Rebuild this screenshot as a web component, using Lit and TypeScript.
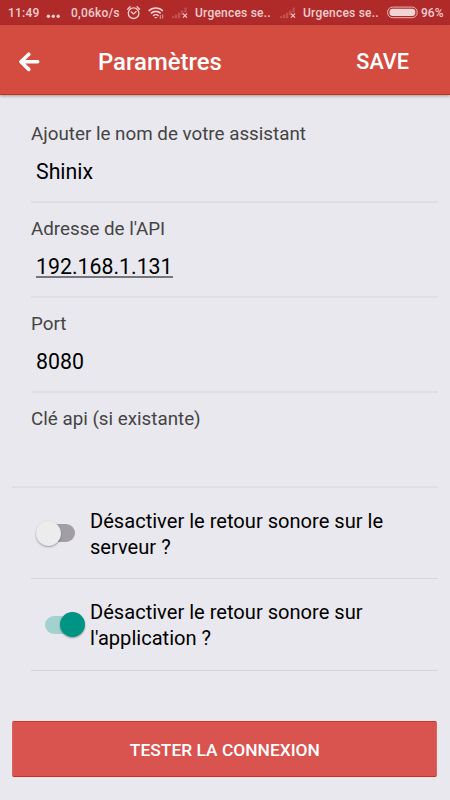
import { LitElement, html, css, svg, nothing } from "lit";
import { customElement, property } from "lit/decorators.js";
import { classMap } from "lit/directives/class-map.js";

@customElement("signal-icon")
class SignalIcon extends LitElement {
  static styles = css`
    :host { display: block; width: 16px; height: 12px; }
    svg { display: block; }
  `;
  render() {
    return html`<svg width="16" height="12" viewBox="0 0 16 12">
      ${[[0, 9.2, 2], [3, 7.4, 3.8], [6, 5.6, 5.6], [9, 3.5, 4.5], [12.4, 0.6, 5]].map(
        ([x, y, h]) => svg`<rect x=${x} y=${y} width="2.3" height=${h} fill="#c54f4f"></rect>`
      )}
      <path d="M11 6.7l4 4M15 6.7l-4 4" stroke="#f3cfcf" stroke-width="1.2"></path>
    </svg>`;
  }
}

@customElement("status-bar")
class StatusBar extends LitElement {
  static styles = css`
    :host {
      display: flex; align-items: center; height: 25px; box-sizing: border-box;
      position: relative;
      background: #b02a2a; color: #f3cfcf; padding-left: 8px;
      font: 500 12px/25px Roboto, sans-serif; white-space: nowrap;
    }
    span { display: block; flex: none; padding-top: 1px; }
    svg { display: block; flex: none; }
    .time { width: 38px; letter-spacing: 0.2px; }
    .dots { width: 25px; }
    .rate { width: 56px; letter-spacing: 0.2px; }
    .alarm { width: 21px; }
    .wifi { width: 24px; }
    signal-icon { flex: none; margin-right: 7px; margin-top: 1px; }
    .carrier { width: 85px; letter-spacing: 0.22px; }
    .carrier.last { width: 84px; }
    .battery { width: 34px; }
  `;
  render() {
    return html`
      <span class="time">11:49</span>
      <svg class="dots" width="25" height="12" viewBox="0 0 25 12" fill="#f3cfcf">
        <circle cx="2.4" cy="9.3" r="1.7"></circle><circle cx="7.3" cy="9.3" r="1.7"></circle><circle cx="12.2" cy="9.3" r="1.7"></circle>
      </svg>
      <span class="rate">0,06ko/s</span>
      <svg class="alarm" width="21" height="16" viewBox="0 0 21 16" fill="none" stroke="#f3cfcf" stroke-width="1.3" stroke-linecap="round">
        <circle cx="6.6" cy="8.2" r="5.3"></circle>
        <path d="M4.2 6.9l2.4 2 2.6-2.3M.7 4.2l2.4-2.4M12.5 4.2l-2.4-2.4"></path>
      </svg>
      <svg class="wifi" width="24" height="14" viewBox="0 0 24 14" fill="none" stroke="#f3cfcf" stroke-width="1.6">
        <path d="M.7 5a10 10 0 0 1 14.2 0M2.9 7.4a7 7 0 0 1 9.8 0M5.1 9.8a3.9 3.9 0 0 1 5.4 0"></path>
        <path d="M6.2 10.9L7.8 12.8 9.4 10.9z" fill="#f3cfcf" stroke="none"></path>
        <path d="M12.3 9v4M14.6 8.5v4" stroke="#d88888" stroke-width="1.3"></path>
      </svg>
      <signal-icon></signal-icon><span class="carrier">Urgences se..</span>
      <signal-icon></signal-icon><span class="carrier last">Urgences se..</span>
      <svg class="battery" width="34" height="13" viewBox="0 0 34 13">
        <rect x=".6" y="1.1" width="29.6" height="10.6" rx="5" fill="none" stroke="#e9b6b6" stroke-width="1"></rect>
        <rect x="2.5" y="2.8" width="25.8" height="7.2" rx="3.2" fill="#f0d4d4"></rect>
      </svg>
      <span>96%</span>
    `;
  }
}

@customElement("app-header")
class AppHeader extends LitElement {
  static styles = css`
    :host {
      display: flex; align-items: center; height: 70px; box-sizing: border-box;
      background: #d44c40; border-bottom: 1px solid #cc2c10; color: #fff;
      box-shadow: 0 1px 3px rgba(60, 80, 80, 0.5); position: relative;
      font-family: Roboto, sans-serif; padding: 4px 41px 0 18px;
    }
    svg { display: block; width: 80px; flex: none; }
    .title { flex: 1; font-size: 23.9px; font-weight: 500; }
    .save { font-size: 21.6px; font-weight: 500; }
  `;
  render() {
    return html`
      <svg width="80" height="22" viewBox="0 0 80 22" fill="none" stroke="#fff" stroke-width="3.6" stroke-linecap="round" stroke-linejoin="round">
        <path d="M10.8 3.2L2.9 10.8l7.9 7.6M3.5 10.8H19.7"></path>
      </svg>
      <span class="title">Paramètres</span>
      <span class="save">SAVE</span>
    `;
  }
}

@customElement("text-field")
class TextField extends LitElement {
  @property() label = "";
  @property() value = "";
  @property({ type: Boolean }) suggested = false;
  static styles = css`
    :host {
      display: block; height: 95px; box-sizing: border-box; margin-left: 31px;
      border-bottom: 2px solid #dfdee3; font-family: Roboto, sans-serif;
      padding-top: 14px;
    }
    :host([wide]) { margin-left: 12px; padding-left: 19px; }
    .label { font-size: 18.8px; line-height: 24px; color: #444; }
    .value { margin: 13px 0 0 5px; font-size: 21.3px; line-height: 26px; color: #000; }
    .value span { display: inline-block; line-height: 23px; }
    .value .underlined { border-bottom: 2px solid #77767a; height: 21px; }
  `;
  render() {
    return html`
      <div class="label">${this.label}</div>
      ${this.value
        ? html`<div class="value"><span class=${classMap({ underlined: this.suggested })}>${this.value}</span></div>`
        : nothing}
    `;
  }
}

@customElement("toggle-row")
class ToggleRow extends LitElement {
  @property({ type: Boolean }) on = false;
  static styles = css`
    :host {
      display: flex; height: 91px; box-sizing: border-box; margin-left: 31px;
      border-bottom: 1px solid #d5d4da; font-family: Roboto, sans-serif;
    }
    :host([on]) { height: 92px; }
    .switch { flex: none; width: 59px; display: flex; align-items: center; }
    .track {
      display: flex; width: 34px; height: 18px; border-radius: 9px; margin-left: 10px;
      align-items: center; background: #a19fa5;
    }
    .track.on { margin-left: 14px; width: 38px; justify-content: flex-end; background: #a2d2cf; }
    .thumb {
      width: 25px; height: 25px; border-radius: 50%; background: #ececec; flex: none;
      margin-left: -5px; box-shadow: 0 1px 2px rgba(0, 0, 0, 0.35);
    }
    .on .thumb { background: #009485; margin: 0 -2px 0 0; }
    .text { flex: 1; padding-top: 20px; font-size: 20.1px; line-height: 26px; color: #000; }
  `;
  render() {
    return html`
      <div class="switch"><div class=${classMap({ track: true, on: this.on })}><div class="thumb"></div></div></div>
      <div class="text"><slot></slot></div>
    `;
  }
}

@customElement("app-root")
class AppRoot extends LitElement {
  static styles = css`
    :host { display: block; width: 450px; height: 800px; overflow: hidden; background: #e9e8ee; }
    main { padding: 13px 12px 0 0; }
    .test {
      display: block; box-sizing: border-box; width: 425px; height: 56px; margin: 50px 0 0 12.4px; padding: 2px 0 0;
      background: #d9534f; color: #fff; border: 1px solid #d5655f;
      border-top-color: #d0342a; border-bottom-color: #d9291c; border-radius: 2px;
      font: 500 17.4px/20px Roboto, sans-serif;
    }
  `;
  render() {
    return html`
      <status-bar></status-bar>
      <app-header></app-header>
      <main>
        <text-field label="Ajouter le nom de votre assistant" value="Shinix"></text-field>
        <text-field label="Adresse de l'API" value="192.168.1.131" suggested></text-field>
        <text-field label="Port" value="8080"></text-field>
        <text-field label="Clé api (si existante)" wide></text-field>
        <toggle-row>Désactiver le retour sonore sur le<br>serveur ?</toggle-row>
        <toggle-row on>Désactiver le retour sonore sur<br>l'application ?</toggle-row>
        <button class="test">TESTER LA CONNEXION</button>
      </main>
    `;
  }
}
